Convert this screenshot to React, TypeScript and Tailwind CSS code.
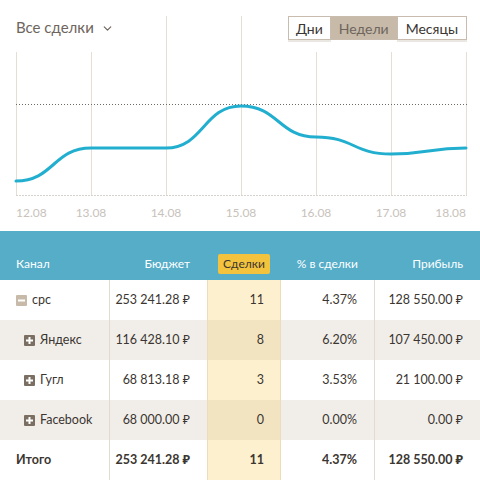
import { ChevronDown } from 'lucide-react';

const gridX = [16, 91, 166, 241, 316, 391, 466];
const labels = ['12.08', '13.08', '14.08', '15.08', '16.08', '17.08', '18.08'];
const points: [number, number][] = [
  [16, 181],
  [91, 148],
  [166, 148],
  [241, 106],
  [316, 137],
  [391, 154],
  [466, 148],
];

function curvePath() {
  let d = `M${points[0][0]},${points[0][1]}`;
  for (let i = 1; i < points.length; i++) {
    const [x0, y0] = points[i - 1];
    const [x1, y1] = points[i];
    const mx = (x0 + x1) / 2;
    d += ` C${mx},${y0} ${mx},${y1} ${x1},${y1}`;
  }
  return d;
}

type Row = {
  name: string;
  level: 0 | 1;
  budget: string;
  deals: string;
  pct: string;
  profit: string;
};

const rows: Row[] = [
  { name: 'cpc', level: 0, budget: '253 241.28 ₽', deals: '11', pct: '4.37%', profit: '128 550.00 ₽' },
  { name: 'Яндекс', level: 1, budget: '116 428.10 ₽', deals: '8', pct: '6.20%', profit: '107 450.00 ₽' },
  { name: 'Гугл', level: 1, budget: '68 813.18 ₽', deals: '3', pct: '3.53%', profit: '21 100.00 ₽' },
  { name: 'Facebook', level: 1, budget: '68 000.00 ₽', deals: '0', pct: '0.00%', profit: '0.00 ₽' },
];

function Toggle({ open }: { open: boolean }) {
  return (
    <span
      className={`flex h-[11px] w-[11px] items-center justify-center rounded-[1px] ${
        open ? 'bg-[#c7baa9]' : 'bg-[#7b6f63]'
      }`}
    >
      <svg width="9" height="9" viewBox="0 0 9 9">
        <rect x="1" y="3.5" width="7" height="2" fill="#fff" />
        {!open && <rect x="3.5" y="1" width="2" height="7" fill="#fff" />}
      </svg>
    </span>
  );
}

export default function App() {
  return (
    <div className="w-[480px] h-[480px] overflow-hidden bg-white font-['Lato','Noto_Sans',sans-serif] text-[#3b3631]">
      {/* Chart */}
      <div className="relative h-[231px]">
        <svg className="absolute inset-0" width="480" height="231" viewBox="0 0 480 231">
          {gridX.map((x) => (
            <line
              key={x}
              x1={x + 0.5}
              x2={x + 0.5}
              y1={x === 166 || x === 241 ? 16 : 52}
              y2={195}
              stroke="#e6ded4"
              strokeWidth="1"
            />
          ))}
          <line x1="16" x2="467" y1="195.5" y2="195.5" stroke="#d6d2cd" strokeDasharray="2 1" />
          <line x1="16" x2="467" y1="104.5" y2="104.5" stroke="#6e6a66" strokeDasharray="1 2" />
          <path d={curvePath()} fill="none" stroke="#22afcf" strokeWidth="3" strokeLinecap="round" />
          {labels.map((l, i) => (
            <text
              key={l}
              x={i === 0 ? 16 : i === 6 ? 466 : gridX[i]}
              y="217"
              textAnchor={i === 0 ? 'start' : i === 6 ? 'end' : 'middle'}
              fontSize="12"
              fill="#c8c2bb"
              fontFamily="Lato, sans-serif"
            >
              {l}
            </text>
          ))}
        </svg>

        <div className="relative flex items-start justify-between px-[14px] pt-4">
          <div className="flex h-[23px] items-center gap-[7px] pl-[2px] text-[15px] text-[#6e655d]">
            <span>Все сделки</span>
            <ChevronDown size={13} strokeWidth={2.2} className="mt-[1px]" />
          </div>
          <div className="flex h-[24px] text-[14px] mr-[-1px]">
            <button className="border border-[#c8bcae] bg-white px-[7px] text-[#3b3631] shadow-[0_2px_0_#ebe7e2]">
              Дни
            </button>
            <button className="border-y border-[#c8bcae] bg-[#c7baa9] px-[8px] text-[#6e655d]">
              Недели
            </button>
            <button className="border border-[#c8bcae] bg-white px-[8px] text-[#3b3631] shadow-[0_2px_0_#ebe7e2]">
              Месяцы
            </button>
          </div>
        </div>
      </div>

      {/* Table */}
      <div className="grid grid-cols-[110px_97px_74px_94px_105px] text-[12.5px]">
        <div className="col-span-5 grid h-[49px] grid-cols-[110px_97px_74px_94px_105px] items-end bg-[#55adc8] pb-[6px] text-[12px] text-white">
          <div className="pl-4 leading-5">Канал</div>
          <div className="pr-[17px] text-right leading-5">Бюджет</div>
          <div className="flex justify-center">
            <span className="rounded-[2px] bg-[#f3c33d] px-[5px] leading-5 text-[#3b3631]">Сделки</span>
          </div>
          <div className="pr-[17px] text-right leading-5">% в сделки</div>
          <div className="pr-[17px] text-right leading-5">Прибыль</div>
        </div>

        {rows.map((r, i) => {
          const alt = i % 2 === 1;
          const bg = alt ? 'bg-[#f1eeea]' : 'bg-white';
          return (
            <div key={r.name} className={`col-span-5 grid h-10 grid-cols-[110px_97px_74px_94px_105px] items-stretch ${bg}`}>
              <div
                className={`flex items-center gap-[5px] border-r border-[#e3dbd0] ${
                  r.level === 0 ? 'pl-4' : 'pl-6'
                }`}
              >
                <Toggle open={r.level === 0} />
                <span>{r.name}</span>
              </div>
              <div className="flex items-center justify-end pr-[17px]">{r.budget}</div>
              <div
                className={`flex items-center justify-end border-x border-[#ecdcbc] pr-[16px] ${
                  alt ? 'bg-[#f2e4c1]' : 'bg-[#fdf0cf]'
                }`}
              >
                {r.deals}
              </div>
              <div className="flex items-center justify-end border-r border-[#e3dbd0] pr-[17px]">{r.pct}</div>
              <div className="flex items-center justify-end pr-[17px]">{r.profit}</div>
            </div>
          );
        })}

        <div className="col-span-5 grid h-10 grid-cols-[110px_97px_74px_94px_105px] bg-white font-bold">
          <div className="flex items-center border-r border-[#e3dbd0] pl-4">Итого</div>
          <div className="flex items-center justify-end pr-[17px]">253 241.28 ₽</div>
          <div className="flex items-center justify-end border-x border-[#ecdcbc] bg-[#fdf0cf] pr-[16px]">11</div>
          <div className="flex items-center justify-end border-r border-[#e3dbd0] pr-[17px]">4.37%</div>
          <div className="flex items-center justify-end pr-[17px]">128 550.00 ₽</div>
        </div>
      </div>
    </div>
  );
}
